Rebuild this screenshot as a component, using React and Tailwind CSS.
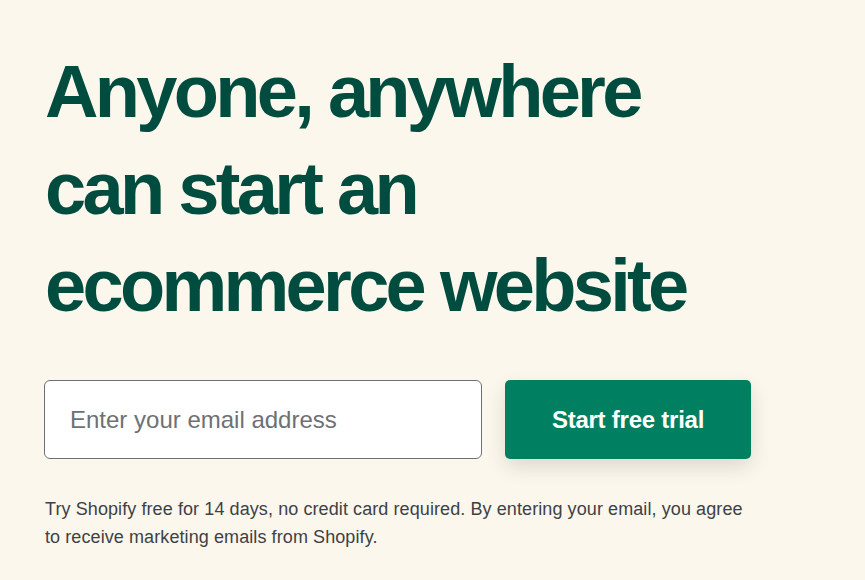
export default function App() {
  return (
    <div className="min-h-[580px] w-full bg-[#fbf7ed] font-['Liberation_Sans',sans-serif]">
      <div className="pl-[45px] pt-[43px]">
        <h1 className="text-[74px] font-bold leading-[97px] tracking-[-0.05em] text-[#004c3f]">
          Anyone, anywhere
          <br />
          can start an
          <br />
          ecommerce website
        </h1>

        <form className="mt-[46px] flex items-center gap-[23px]" onSubmit={(e) => e.preventDefault()}>
          <input
            type="email"
            placeholder="Enter your email address"
            className="-ml-px h-[79px] w-[438px] rounded-[6px] border border-[#6d7175] bg-white px-[25px] text-[24px] text-[#202223] placeholder:text-[#6d7175] outline-none"
          />
          <button
            type="submit"
            className="h-[79px] w-[246px] rounded-[5px] bg-[#008060] text-[24px] font-bold tracking-[-0.01em] text-white shadow-[0_8px_20px_rgba(0,0,0,0.12)]"
          >
            Start free trial
          </button>
        </form>

        <p className="mt-[36px] max-w-[760px] text-[18px] leading-[28px] tracking-[0.005em] text-[#3e4146]">
          Try Shopify free for 14 days, no credit card required. By entering your email, you agree
          <br />
          to receive marketing emails from Shopify.
        </p>
      </div>
    </div>
  );
}
